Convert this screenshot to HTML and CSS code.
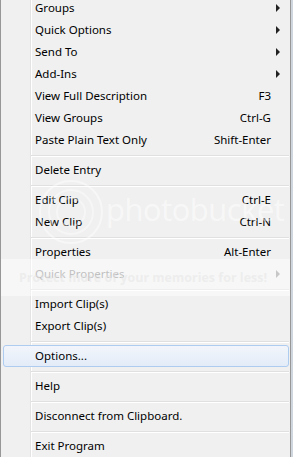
FILE: index.html
```html
<!DOCTYPE html>
<html lang="en">
<head>
    <meta charset="UTF-8">
    <title>Context menu</title>
    <link rel="stylesheet" href="styles.css">
</head>
<body>
<div class="menu">
    <div class="item"><span class="label">Groups</span><span class="arrow"></span></div>
    <div class="item"><span class="label">Quick Options</span><span class="arrow"></span></div>
    <div class="item"><span class="label">Send To</span><span class="arrow"></span></div>
    <div class="item"><span class="label">Add-Ins</span><span class="arrow"></span></div>
    <div class="item"><span class="label">View Full Description</span><span class="key">F3</span></div>
    <div class="item"><span class="label">View Groups</span><span class="key">Ctrl-G</span></div>
    <div class="item"><span class="label">Paste Plain Text Only</span><span class="key">Shift-Enter</span></div>
    <div class="sep"></div>
    <div class="item"><span class="label">Delete Entry</span></div>
    <div class="sep"></div>
    <div class="item"><span class="label">Edit Clip</span><span class="key">Ctrl-E</span></div>
    <div class="item"><span class="label">New Clip</span><span class="key">Ctrl-N</span></div>
    <div class="sep"></div>
    <div class="item"><span class="label">Properties</span><span class="key">Alt-Enter</span></div>
    <div class="item disabled"><span class="label">Quick Properties</span><span class="arrow"></span></div>
    <div class="sep"></div>
    <div class="item"><span class="label">Import Clip(s)</span></div>
    <div class="item"><span class="label">Export Clip(s)</span></div>
    <div class="sep"></div>
    <div class="item hover"><span class="label">Options...</span></div>
    <div class="sep"></div>
    <div class="item"><span class="label">Help</span></div>
    <div class="sep"></div>
    <div class="item"><span class="label">Disconnect from Clipboard.</span></div>
    <div class="sep"></div>
    <div class="item"><span class="label">Exit Program</span></div>

    <!-- photobucket watermark over the menu -->
    <div class="mark-logo"><div class="ring r2"></div><div class="ring r3"></div></div>
    <div class="mark-text">photobucket</div>
    <div class="mark-band">Protect more of your memories for less!</div>
</div>
</body>
</html>
```

FILE: styles.css
```css
html, body{
    margin: 0;
    padding: 0;
}
body{
    background: #cfd6de;
    width: 293px;
    height: 457px;
    overflow: hidden;
    font: 11.5px/22px "Noto Sans", "Open Sans", sans-serif;
    color: #000;
}
.menu{
    position: relative;
    width: 289px;
    height: 460px;
    margin-top: -3px;
    border-left: 1px solid #979797;
    border-right: 1px solid #979797;
    background: linear-gradient(to right, #f0f0f0 29px, #e2e3e3 29px, #e2e3e3 30px, #fff 30px, #fff 31px, #f0f0f0 31px);
    overflow: hidden;
}
.item{
    display: flex;
    align-items: center;
    height: 22px;
    padding: 0 11px 0 34px;
    white-space: nowrap;
}
.item .label{
    flex: 1;
}
.item .key{
    padding-right: 8px;
}
.item .arrow{
    width: 0;
    height: 0;
    border-top: 4px solid transparent;
    border-bottom: 4px solid transparent;
    border-left: 4px solid #222;
    margin-right: -1px;
}
.item.disabled{
    color: #8d8d8d;
}
.item.disabled .arrow{
    border-left-color: #9a9a9a;
}
.item.hover{
    height: 20px;
    margin: 0 1px 0 2px;
    padding-left: 31px;
    border: 1px solid #aeccf0;
    border-radius: 3px;
    background: linear-gradient(#f2f6fb, #e3ecf8);
}
.sep{
    height: 8px;
    margin: 0 1px 0 30px;
    box-sizing: border-box;
    padding-top: 4px;
}
.sep:before{
    content: "";
    display: block;
    height: 1px;
    border-bottom: 1px solid #fff;
    background: #e0e0e0;
}
.mark-logo{
    position: absolute;
    left: 38px;
    top: 183px;
    width: 60px;
    height: 60px;
    border-radius: 50%;
    border: 2px solid rgba(255,255,255,.45);
    pointer-events: none;
}
.mark-logo .ring{
    position: absolute;
    border-radius: 50%;
    border: 2px solid rgba(255,255,255,.4);
}
.mark-logo .r2{
    left: 7px;
    top: 7px;
    right: 7px;
    bottom: 7px;
}
.mark-logo .r3{
    left: 15px;
    top: 15px;
    right: 15px;
    bottom: 15px;
}
.mark-text{
    position: absolute;
    left: 105px;
    top: 192px;
    font: 31px/40px "Open Sans", sans-serif;
    color: rgba(255,255,255,.5);
    letter-spacing: -.5px;
    pointer-events: none;
}
.mark-band{
    position: absolute;
    left: 0;
    right: 0;
    top: 262px;
    height: 37px;
    padding-left: 18px;
    background: rgba(255,255,255,.45);
    font: bold 12.5px/37px "Open Sans", sans-serif;
    color: rgba(225,225,225,.45);
    white-space: nowrap;
    pointer-events: none;
}
```
